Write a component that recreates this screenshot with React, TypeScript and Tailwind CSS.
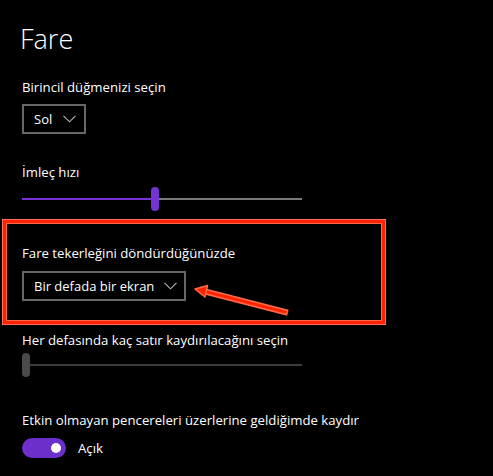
import React from "react";

const Chevron = () => (
  <svg width="13" height="8" viewBox="0 0 13 8" className="shrink-0">
    <polyline points="0.5,0.8 6.5,6.8 12.5,0.8" fill="none" stroke="#b8b8b8" strokeWidth="1.1" />
  </svg>
);

const Dropdown = ({ label, width, gap }: { label: string; width: string; gap: string }) => (
  <div className={`flex h-[30px] items-center border-2 border-[#676767] pl-[10px] ${width}`}>
    <span className="whitespace-nowrap text-[13px] leading-[20px] text-white">{label}</span>
    <span className={gap}>
      <Chevron />
    </span>
  </div>
);

export default function App() {
  return (
    <div
      className="relative h-[476px] w-[493px] overflow-hidden bg-black text-white"
      style={{ fontFamily: '"Open Sans", "Noto Sans", sans-serif' }}
    >
      <div className="flex flex-col pl-[22px] pt-[21px] text-[13.2px] leading-[20px] whitespace-nowrap">
        <h1 className="-ml-[2px] text-[27px] font-light leading-[36px] text-white">Fare</h1>

        <div className="mt-[20px]">Birincil düğmenizi seçin</div>
        <div className="mt-[7px]">
          <Dropdown label="Sol" width="w-[64px]" gap="ml-[11px]" />
        </div>

        <div className="mt-[28px]">İmleç hızı</div>
        <div className="relative mt-[5px] flex h-[24px] w-[280px] items-center">
          <div className="h-[2px] w-[129px] bg-[#7433d2]" />
          <div className="h-[24px] w-[8px] rounded-full bg-[#7433d2]" />
          <div className="h-[2px] flex-1 bg-[#7a7a7a]" />
        </div>

        <div
          className="-ml-[20px] mt-[8px] w-[384px] pb-[24px] pl-[20px] pt-[24px]"
          style={{
            boxShadow:
              "inset 0 0 0 1px #ff7050, inset 0 0 0 4px #ff2200, inset 0 0 0 5px #ff6a48",
          }}
        >
          <div>Fare tekerleğini döndürdüğünüzde</div>
          <div className="mt-[8px]">
            <Dropdown label="Bir defada bir ekran" width="w-[164px]" gap="ml-[10px]" />
          </div>
        </div>

        <div className="mt-[5px]">Her defasında kaç satır kaydırılacağını seçin</div>
        <div className="mt-[3px] flex h-[24px] w-[280px] items-center">
          <div className="h-[24px] w-[8px] rounded-full bg-[#4a4a4a]" />
          <div className="h-[2px] flex-1 bg-[#3c3c3c]" />
        </div>

        <div className="mt-[33px]">Etkin olmayan pencereleri üzerlerine geldiğimde kaydır</div>
        <div className="mt-[8px] flex items-center">
          <div className="flex h-[20px] w-[44px] items-center justify-end rounded-full bg-[#6c2fcb] pr-[5px]">
            <div className="h-[10px] w-[10px] rounded-full bg-white" />
          </div>
          <span className="ml-[12px]">Açık</span>
        </div>
      </div>

      <svg className="pointer-events-none absolute left-0 top-0" width="493" height="476">
        <line x1="203" y1="291" x2="285" y2="312" stroke="#ff6a48" strokeWidth="6" strokeLinecap="square" />
        <line x1="203" y1="291" x2="285" y2="312" stroke="#ff2200" strokeWidth="3" strokeLinecap="square" />
        <polygon
          points="195,289 205,297 207.5,285.5"
          fill="#ff2200"
          stroke="#ff6a48"
          strokeWidth="1.5"
          strokeLinejoin="round"
        />
      </svg>
    </div>
  );
}
